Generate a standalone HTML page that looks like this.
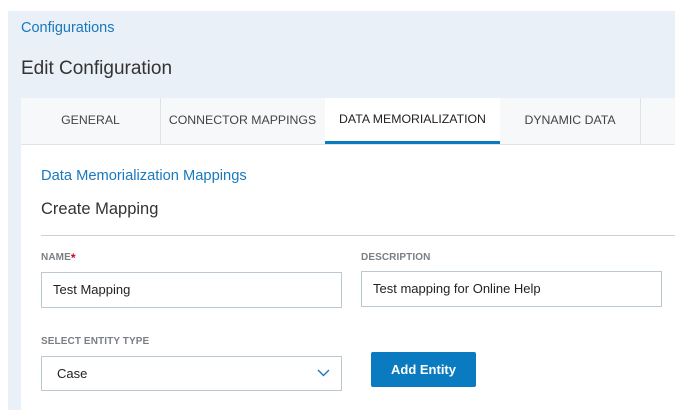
<!DOCTYPE html>
<html><head><style>
body{margin:0;width:687px;height:410px;background:#fff;font-family:"Liberation Sans",sans-serif;position:relative;overflow:hidden}
.panel{position:absolute;left:8px;top:11px;width:667px;bottom:0;background:#e9f0f7}
.card{position:absolute;left:21px;top:98px;width:654px;bottom:0;background:#fff}
.tabs{position:absolute;left:0;top:0;right:0;height:46px;background:#f6f8fa;border-bottom:1px solid #dde3ea}
.tab{position:absolute;top:0;height:46px;line-height:44px;text-align:center;font-size:12.3px;color:#444;border-right:1px solid #dde3ea}
.abs{position:absolute}
.lbl{font-size:10px;font-weight:bold;color:#7a7f86;letter-spacing:.1px;line-height:12px}
.inp{position:absolute;border:1px solid #bcc8d1;box-sizing:border-box;font-size:13px;color:#222;padding-left:11px}
</style></head><body>
<div class="panel"></div>
<div class="abs" style="left:21px;top:20px;font-size:14.5px;color:#1a78bd">Configurations</div>
<div class="abs" style="left:21px;top:58px;font-size:19px;color:#333">Edit Configuration</div>
<div class="card">
 <div class="tabs">
  <div class="tab" style="left:0;width:139px">GENERAL</div>
  <div class="tab" style="left:139px;width:165px">CONNECTOR MAPPINGS</div>
  <div class="tab" style="left:304px;width:175px;background:#fff;color:#222;border-right:none;border-bottom:3px solid #0a7bc1;height:43px;line-height:42px">DATA MEMORIALIZATION</div>
  <div class="tab" style="left:479px;width:140px">DYNAMIC DATA</div>
 </div>
</div>
<div class="abs" style="left:41px;top:168px;font-size:14.7px;color:#1a78bd">Data Memorialization Mappings</div>
<div class="abs" style="left:41px;top:200px;font-size:16.5px;color:#333">Create Mapping</div>
<div class="abs" style="left:41px;top:235px;width:634px;height:1px;background:#ccd1d6"></div>
<div class="abs lbl" style="left:41px;top:252px">NAME<span style="color:#d0021b;font-size:12px;line-height:12px;vertical-align:top">*</span></div>
<div class="abs lbl" style="left:361px;top:252px">DESCRIPTION</div>
<div class="inp" style="left:41px;top:272px;width:301px;height:36px;line-height:34px">Test Mapping</div>
<div class="inp" style="left:361px;top:271px;width:301px;height:36px;line-height:34px">Test mapping for Online Help</div>
<div class="abs lbl" style="left:41px;top:336px">SELECT ENTITY TYPE</div>
<div class="inp" style="left:41px;top:356px;width:301px;height:35px;line-height:33px;padding-left:15px">Case
<svg style="position:absolute;right:11px;top:12px" width="13" height="8" viewBox="0 0 13 8"><path d="M1 1l5.5 5.5L12 1" fill="none" stroke="#1a78bd" stroke-width="1.4"/></svg></div>
<div class="abs" style="left:371px;top:352px;width:105px;height:35px;background:#0a7bc1;border-radius:2px;color:#fff;font-weight:bold;font-size:13px;line-height:35px;text-align:center">Add Entity</div>
</body></html>
